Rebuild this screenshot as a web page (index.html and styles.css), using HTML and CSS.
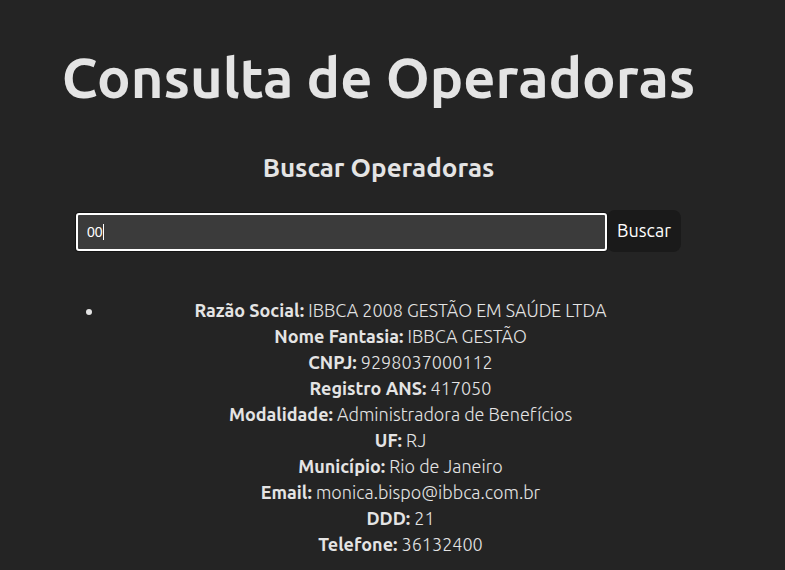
FILE: index.html
```html
<!DOCTYPE html>
<html lang="pt-BR">
<head>
<meta charset="utf-8">
<meta name="viewport" content="width=device-width, initial-scale=1">
<title>Consulta de Operadoras</title>
<link rel="stylesheet" href="styles.css">
</head>
<body>
<main class="app">
<h1>Consulta de Operadoras</h1>
<section>
<h2>Buscar Operadoras</h2>
<form class="search">
<div class="field">
<input class="search-input" type="text" value="00" aria-label="Buscar operadoras">
<span class="caret"></span>
</div>
<button class="search-button" type="button">Buscar</button>
</form>
<ul class="results">
<li>
<strong>Razão Social:</strong> IBBCA 2008 GESTÃO EM SAÚDE LTDA<br>
<strong>Nome Fantasia:</strong> IBBCA GESTÃO<br>
<strong>CNPJ:</strong> 9298037000112<br>
<strong>Registro ANS:</strong> 417050<br>
<strong>Modalidade:</strong> Administradora de Benefícios<br>
<strong>UF:</strong> RJ<br>
<strong>Município:</strong> Rio de Janeiro<br>
<strong>Email:</strong> monica.bispo@ibbca.com.br<br>
<strong>DDD:</strong> 21<br>
<strong>Telefone:</strong> 36132400
</li>
</ul>
</section>
</main>
</body>
</html>
```
FILE: styles.css
```css
* { box-sizing: border-box; }
body {
  margin: 0;
  background: #242424;
  color: #e4e4e4;
  font-family: Ubuntu, "Noto Sans", sans-serif;
  font-size: 18px;
  font-weight: 300;
  line-height: 26px;
}
.app {
  padding: 46px 88px 12px 60px;
  text-align: center;
}
h1 {
  margin: 0 0 40px;
  font-size: 56px;
  font-weight: 700;
  line-height: 64px;
  white-space: nowrap;
}
h2 {
  margin: 0 0 24px;
  font-size: 26px;
  font-weight: 700;
  line-height: 36px;
}
.search { display: flex; align-items: center; margin: 0 16px 45px; }
.field { position: relative; flex: 1; padding-top: 2px; }
.search-input {
  display: block;
  width: 100%;
  height: 38px;
  padding: 0 9px;
  border: 2px solid #fff;
  border-radius: 3px;
  outline: 0;
  box-shadow: 0 0 0 1px #141414;
  background: #3b3b3b;
  color: #fff;
  font: 14px/20px "Liberation Sans", sans-serif;
}
.caret {
  position: absolute;
  top: 13px;
  left: 27px;
  width: 1px;
  height: 16px;
  background: #fff;
}
.search-button {
  height: 42px;
  padding: 0 10px 2px;
  border: 0;
  border-radius: 8px;
  background: #1a1a1a;
  color: #fff;
  font: 400 18px/26px Ubuntu, "Noto Sans", sans-serif;
}
.results { margin: 0; padding-left: 44px; }
strong { font-weight: 700; }
```
